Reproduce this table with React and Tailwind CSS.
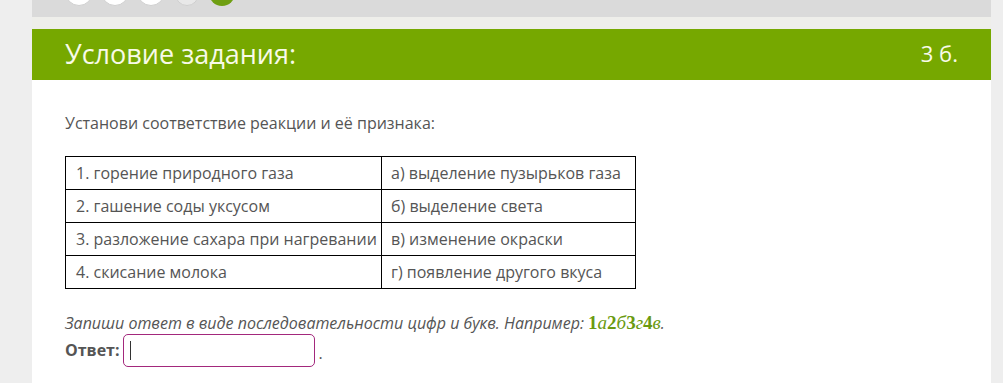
import React from "react";

const rows = [
  ["1. горение природного газа", "а) выделение пузырьков газа"],
  ["2. гашение соды уксусом", "б) выделение света"],
  ["3. разложение сахара при нагревании", "в) изменение окраски"],
  ["4. скисание молока", "г) появление другого вкуса"],
];

export default function App() {
  return (
    <div
      className="flex w-[1003px] h-[383px] bg-[#eeeeee] overflow-hidden"
      style={{ fontFamily: '"Open Sans", "Noto Sans", sans-serif' }}
    >
      <div className="ml-[32px] w-[959px] flex flex-col shrink-0">
        <div className="h-[17px] bg-[#dadada] overflow-hidden shrink-0">
          <div className="flex gap-[8px] pl-[33px] mt-[-22px]">
            <div className="w-[28px] h-[28px] rounded-full bg-white border border-[#d0d0d0]" />
            <div className="w-[28px] h-[28px] rounded-full bg-white border border-[#d0d0d0]" />
            <div className="w-[28px] h-[28px] rounded-full bg-white border border-[#d0d0d0]" />
            <div className="w-[24px] h-[28px] rounded-full bg-[#e8e8e8] border border-[#cfcfcf] ml-[2px] mr-[2px]" />
            <div className="w-[26px] h-[28px] rounded-full bg-[#6f9f12]" />
          </div>
        </div>
        <div className="h-[12px] bg-[#eeeeea] shrink-0" />
        <div className="h-[51px] bg-[#76a800] flex items-center justify-between pl-[33px] pr-[33px] pb-[3px] shrink-0">
          <span className="text-[27px] leading-none text-[#f8fae8]">Условие задания:</span>
          <span className="text-[22px] leading-none text-[#f8fae8]">3 б.</span>
        </div>
        <div className="flex-1 bg-white pl-[33px] pt-[33px] text-[#555555] text-[16px] leading-[21px]">
          <p>Установи соответствие реакции и её признака:</p>
          <table className="mt-[22px] border-collapse w-[571px] text-[16px]">
            <tbody>
              {rows.map((r, i) => (
                <tr key={i} className="h-[33px]">
                  <td className="border border-black pl-[10px] w-[316px] p-0 whitespace-nowrap">{r[0]}</td>
                  <td className="border border-black pl-[9px] p-0 whitespace-nowrap">{r[1]}</td>
                </tr>
              ))}
            </tbody>
          </table>
          <p className="mt-[23px] italic">
            Запиши ответ в виде последовательности цифр и букв. Например:{" "}
            <span className="text-[#6a9a10] not-italic text-[19px]" style={{ fontFamily: '"Liberation Serif", "DejaVu Serif", serif' }}>
              <b>1</b><i>а</i><b>2</b><i>б</i><b>3</b><i>г</i><b>4</b><i>в</i>
            </span>
            .
          </p>
          <div className="flex items-center">
            <span className="font-bold">Ответ:</span>
            <div className="ml-[3px] w-[192px] h-[33px] rounded-[5px] border border-[#a3287c] flex items-center pl-[6px]">
              <div className="w-[1px] h-[19px] bg-[#333]" />
            </div>
            <span className="ml-[4px] mt-[6px]">.</span>
          </div>
        </div>
      </div>
    </div>
  );
}
